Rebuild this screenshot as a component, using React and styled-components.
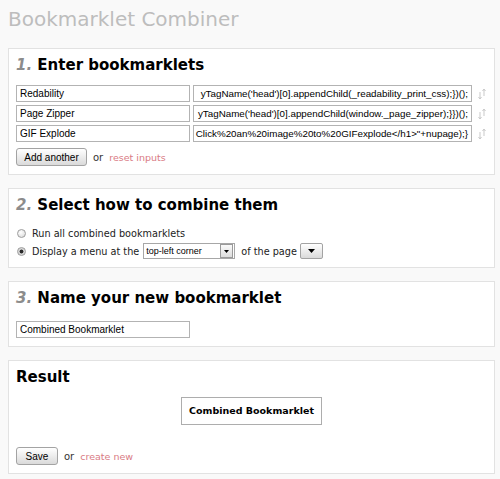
import React from "react";
import styled, { createGlobalStyle } from "styled-components";

const bookmarklets = [
  {
    name: "Redability",
    code: "yTagName('head')[0].appendChild(_readability_print_css);})();",
  },
  {
    name: "Page Zipper",
    code: "yTagName('head')[0].appendChild(window._page_zipper);}})();",
  },
  {
    name: "GIF Explode",
    code: "Click%20an%20image%20to%20GIFexplode</h1>\"+nupage);}",
  },
];

const GlobalStyle = createGlobalStyle`
  body {
    margin: 0;
    background: #f9f9f9;
    font-family: "DejaVu Sans", Verdana, sans-serif;
    color: #222;
  }
`;

const Page = styled.div`
  padding: 7px 5px 5px 8px;
`;

const Title = styled.h1`
  margin: 0 0 17px;
  font-size: 20px;
  line-height: 24px;
  font-weight: normal;
  color: #bdbdbd;
`;

const Section = styled.section`
  background: #fff;
  border: 1px solid #e2e2e2;
  padding: 7px 7px 8px;
  margin-bottom: 13px;
`;

const Heading = styled.h2`
  margin: 0 0 11px;
  font-size: 15px;
  line-height: 18px;
  font-weight: bold;
  color: #000;
`;

const Num = styled.em`
  color: #8c8c8c;
  font-style: italic;
`;

const RowList = styled.div`
  display: flex;
  flex-direction: column;
  gap: 3px;
`;

const Row = styled.div`
  display: flex;
  align-items: center;
  gap: 3px;
`;

const TextField = styled.input`
  width: 174px;
  height: 17px;
  box-sizing: border-box;
  margin: 0;
  padding: 0 3px;
  border: 1px solid #b3b3b3;
  background: #fff;
  font: 10px "Liberation Sans", Arial, sans-serif;
  color: #000;
  outline: none;
`;

const CodeField = styled.div`
  width: 279px;
  height: 17px;
  box-sizing: border-box;
  padding: 0 3px 0 2px;
  border: 1px solid #b3b3b3;
  background: #fff;
  display: flex;
  align-items: center;
  justify-content: flex-end;
  overflow: hidden;
  white-space: nowrap;
  font: 9.8px "Liberation Sans", Arial, sans-serif;
  color: #000;
`;

const SortHandle = styled.svg`
  margin-left: 3px;
  flex: none;
`;

const Actions = styled.div`
  display: flex;
  align-items: center;
  margin-top: ${(p) => p.$top || 6}px;
`;

const Button = styled.button`
  width: ${(p) => p.$w}px;
  height: 18px;
  margin: 0;
  padding: 0;
  border: 1px solid #a3a3a3;
  border-radius: 3px;
  background: linear-gradient(#ffffff, #dadada);
  font: 10px "Liberation Sans", Arial, sans-serif;
  color: #000;
`;

const Or = styled.span`
  margin: 0 6px 0 6px;
  font-size: 10px;
  color: #333;
`;

const TextLink = styled.a`
  font-size: 9.5px;
  color: #d97b84;
  text-decoration: none;
`;

const Options = styled.div`
  display: flex;
  flex-direction: column;
  gap: 2px;
`;

const Option = styled.label`
  display: flex;
  align-items: center;
  height: 16px;
  font-size: 9.7px;
  color: #222;
`;

const Radio = styled.input.attrs({ type: "radio" })`
  appearance: none;
  width: 9px;
  height: 9px;
  margin: 0 6px 0 1px;
  border: 1px solid #9d9d9d;
  border-radius: 50%;
  background: radial-gradient(circle at 40% 35%, #fff, #d6d6d6);
  &:checked {
    background: radial-gradient(circle, #2a2a2a 0 1.6px, #d8d8d8 2.3px);
  }
`;

const SelectWrap = styled.span`
  display: inline-flex;
  align-items: center;
  width: 92px;
  height: 16px;
  box-sizing: border-box;
  margin: 0 6px 0 4px;
  border: 1px solid #a7a7a7;
  background: #fff;
`;

const Select = styled.select`
  appearance: none;
  flex: 1;
  min-width: 0;
  height: 100%;
  border: 0;
  padding: 0 2px;
  background: transparent;
  font: 9px "Liberation Sans", Arial, sans-serif;
  color: #000;
  outline: none;
`;

const ArrowBox = styled.span`
  display: flex;
  align-items: center;
  justify-content: center;
  width: 11px;
  height: 12px;
  margin-right: 1px;
  border: 1px solid #9a9a9a;
  background: linear-gradient(#fafafa, #dcdcdc);
`;

const MenuButton = styled.button`
  display: flex;
  align-items: center;
  justify-content: center;
  width: 23px;
  height: 16px;
  margin: 0 0 0 3px;
  padding: 0;
  border: 1px solid #a3a3a3;
  border-radius: 2px;
  background: linear-gradient(#ffffff, #dadada);
`;

const ResultWrap = styled.div`
  display: flex;
  justify-content: center;
`;

const ResultLink = styled.a`
  display: block;
  height: 28px;
  box-sizing: border-box;
  padding: 0 7px;
  border: 1px solid #adadad;
  line-height: 26px;
  font-size: 9.5px;
  font-weight: bold;
  color: #000;
  text-decoration: none;
`;

const Triangle = ({ w = 7, h = 4 }) => (
  <svg width={w} height={h} viewBox={`0 0 ${w} ${h}`}>
    <polygon points={`0,0 ${w},0 ${w / 2},${h}`} fill="#000" />
  </svg>
);

const Handle = () => (
  <SortHandle width="8" height="12" viewBox="0 0 8 12">
    <g stroke="#c9c9c9" strokeWidth="1" fill="none">
      <line x1="2" y1="4" x2="2" y2="11" />
      <polyline points="0.5,9 2,11 3.5,9" />
      <line x1="6" y1="1" x2="6" y2="8" />
      <polyline points="4.5,3 6,1 7.5,3" />
    </g>
  </SortHandle>
);

export default function App() {
  return (
    <>
      <GlobalStyle />
      <Page>
        <Title>Bookmarklet Combiner</Title>

        <Section>
          <Heading>
            <Num>1.</Num> Enter bookmarklets
          </Heading>
          <RowList>
            {bookmarklets.map((b) => (
              <Row key={b.name}>
                <TextField defaultValue={b.name} />
                <CodeField>
                  <span>{b.code}</span>
                </CodeField>
                <Handle />
              </Row>
            ))}
          </RowList>
          <Actions>
            <Button $w={71}>Add another</Button>
            <Or>or</Or>
            <TextLink href="#">reset inputs</TextLink>
          </Actions>
        </Section>

        <Section>
          <Heading>
            <Num>2.</Num> Select how to combine them
          </Heading>
          <Options>
            <Option>
              <Radio name="mode" />
              Run all combined bookmarklets
            </Option>
            <Option>
              <Radio name="mode" defaultChecked />
              Display a menu at the
              <SelectWrap>
                <Select defaultValue="tl">
                  <option value="tl">top-left corner</option>
                  <option value="tr">top-right corner</option>
                  <option value="bl">bottom-left corner</option>
                  <option value="br">bottom-right corner</option>
                </Select>
                <ArrowBox>
                  <Triangle w={5} h={3} />
                </ArrowBox>
              </SelectWrap>
              of the page
              <MenuButton>
                <Triangle />
              </MenuButton>
            </Option>
          </Options>
        </Section>

        <Section>
          <Heading>
            <Num>3.</Num> Name your new bookmarklet
          </Heading>
          <TextField defaultValue="Combined Bookmarklet" />
        </Section>

        <Section>
          <Heading>Result</Heading>
          <ResultWrap>
            <ResultLink href="#">Combined Bookmarklet</ResultLink>
          </ResultWrap>
          <Actions $top={22}>
            <Button $w={42}>Save</Button>
            <Or>or</Or>
            <TextLink href="#">create new</TextLink>
          </Actions>
        </Section>
      </Page>
    </>
  );
}
